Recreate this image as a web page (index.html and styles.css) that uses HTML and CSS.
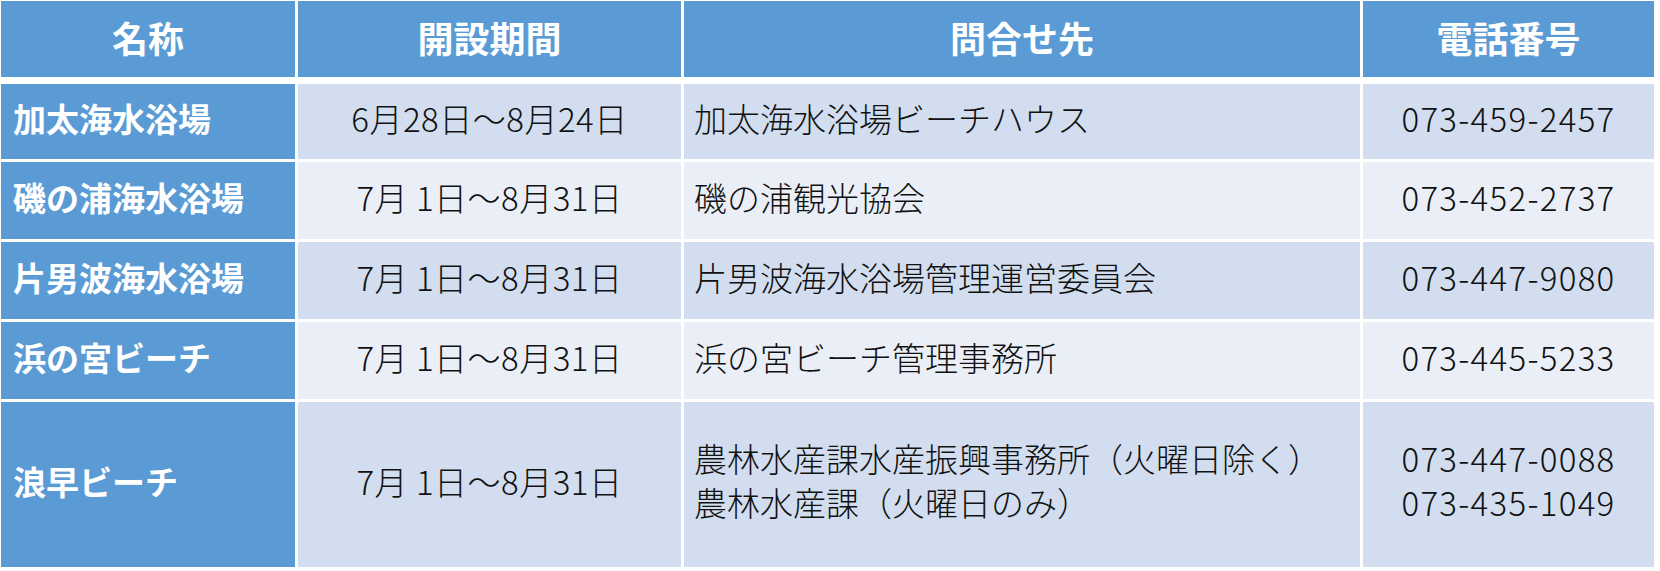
FILE: index.html
```html
<!DOCTYPE html>
<html lang="ja">
<head>
<meta charset="utf-8">
<title>海水浴場一覧</title>
<link rel="stylesheet" href="styles.css">
</head>
<body>
<div class="table">
  <div class="cell head">名称</div>
  <div class="cell head">開設期間</div>
  <div class="cell head">問合せ先</div>
  <div class="cell head">電話番号</div>

  <div class="cell name first">加太海水浴場</div>
  <div class="cell odd center date first">6月28日～8月24日</div>
  <div class="cell odd left first">加太海水浴場ビーチハウス</div>
  <div class="cell odd center tel first">073-459-2457</div>

  <div class="cell name">磯の浦海水浴場</div>
  <div class="cell even center date">7月 1日～8月31日</div>
  <div class="cell even left">磯の浦観光協会</div>
  <div class="cell even center tel">073-452-2737</div>

  <div class="cell name">片男波海水浴場</div>
  <div class="cell odd center date">7月 1日～8月31日</div>
  <div class="cell odd left">片男波海水浴場管理運営委員会</div>
  <div class="cell odd center tel">073-447-9080</div>

  <div class="cell name">浜の宮ビーチ</div>
  <div class="cell even center date">7月 1日～8月31日</div>
  <div class="cell even left">浜の宮ビーチ管理事務所</div>
  <div class="cell even center tel">073-445-5233</div>

  <div class="cell name">浪早ビーチ</div>
  <div class="cell odd center date">7月 1日～8月31日</div>
  <div class="cell odd left multi">農林水産課水産振興事務所（火曜日除く）<br>農林水産課（火曜日のみ）</div>
  <div class="cell odd center tel multi">073-447-0088<br>073-435-1049</div>
</div>
</body>
</html>
```

FILE: styles.css
```css
html, body {
  margin: 0;
  padding: 0;
  background: #ffffff;
}

body {
  padding: 1px 0 0 1px;
  font-family: "Noto Sans CJK JP", "Noto Sans", sans-serif;
}

.table {
  display: grid;
  width: 1653px;
  grid-template-columns: 294px 383px 676px 291px;
  grid-template-rows: 76px 79px 77px 77px 77px 165px;
  column-gap: 3px;
  row-gap: 3px;
}

.cell {
  display: flex;
  align-items: center;
  box-sizing: border-box;
  padding-bottom: 7px;
  font-size: 33px;
  line-height: 38px;
  font-weight: 300;
  color: #111111;
  white-space: nowrap;
}

.head {
  background: #5b9bd5;
  color: #ffffff;
  font-weight: 700;
  font-size: 36px;
  justify-content: center;
  padding-bottom: 4px;
}

.first {
  margin-top: 4px;
}

.name {
  background: #5b9bd5;
  color: #ffffff;
  font-weight: 700;
  padding-left: 12px;
}

.odd {
  background: #d2deef;
}

.even {
  background: #eaeff7;
}

.center {
  justify-content: center;
  text-align: center;
}

.left {
  padding-left: 10px;
}

.date {
  letter-spacing: 0.5px;
}

.tel {
  letter-spacing: 1.3px;
}

.multi {
  line-height: 44px;
  padding-bottom: 10px;
}
```
